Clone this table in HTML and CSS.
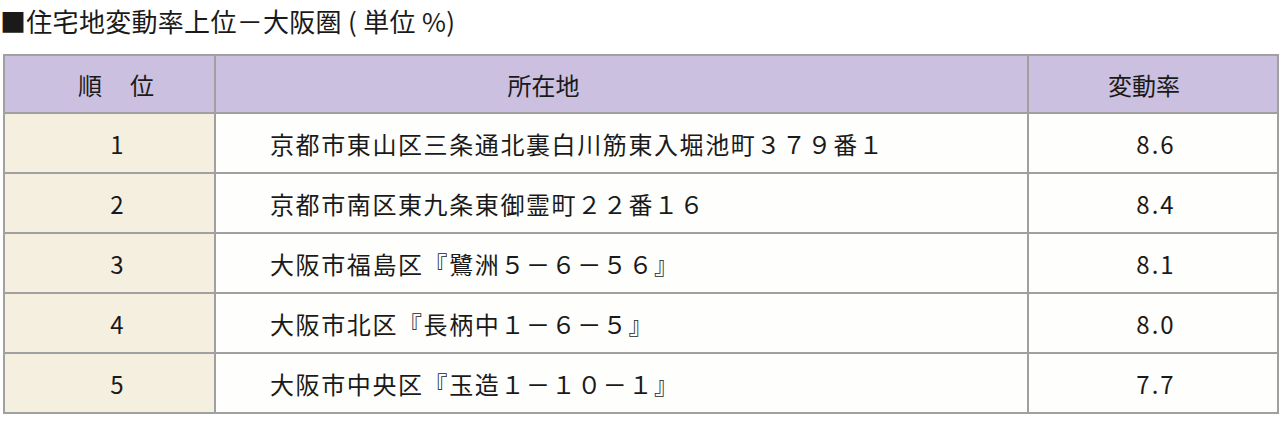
FILE: index.html
```html
<!DOCTYPE html>
<html lang="ja">
<head>
<meta charset="utf-8">
<link rel="stylesheet" href="styles.css">
</head>
<body>
<div class="title">■住宅地変動率上位－大阪圏 ( 単位 %)</div>
<table class="rank">
  <colgroup>
    <col class="c1"><col class="c2"><col class="c3">
  </colgroup>
  <thead>
    <tr><th class="h-no">順　位</th><th class="h-addr">所在地</th><th class="h-val">変動率</th></tr>
  </thead>
  <tbody>
    <tr><td class="no">1</td><td class="addr">京都市東山区三条通北裏白川筋東入堀池町３７９番１</td><td class="val">8.6</td></tr>
    <tr><td class="no">2</td><td class="addr">京都市南区東九条東御霊町２２番１６</td><td class="val">8.4</td></tr>
    <tr><td class="no">3</td><td class="addr">大阪市福島区『鷺洲５－６－５６』</td><td class="val">8.1</td></tr>
    <tr><td class="no">4</td><td class="addr">大阪市北区『長柄中１－６－５』</td><td class="val">8.0</td></tr>
    <tr><td class="no">5</td><td class="addr">大阪市中央区『玉造１－１０－１』</td><td class="val">7.7</td></tr>
  </tbody>
</table>
</body>
</html>
```
FILE: styles.css
```css
html, body {
  margin: 0;
  padding: 0;
  background: #ffffff;
}
body {
  font-family: "Noto Sans CJK JP", "Noto Sans", sans-serif;
  color: #1a1a1a;
}
.title {
  font-size: 26px;
  line-height: 30px;
  padding: 6px 0 0 0;
  height: 54px;
  box-sizing: border-box;
  white-space: nowrap;
  letter-spacing: 0.3px;
}
.rank {
  margin-left: 3px;
  width: 1274px;
  border-collapse: collapse;
  table-layout: fixed;
  font-size: 24px;
}
.c1 { width: 211px; }
.c2 { width: 813px; }
.c3 { width: 250px; }
.rank th, .rank td {
  border: 2px solid #a0a0a0;
  padding: 0;
  font-weight: normal;
}
.rank th {
  background: #cbc0df;
  height: 56px;
  text-align: center;
}
.rank th.h-no { padding-left: 15px; letter-spacing: 2px; }
.rank th.h-addr { padding-right: 156px; }
.rank th.h-val { padding-right: 18px; }
.rank td {
  height: 58px;
  background: #fefefc;
}
.rank td.no {
  background: #f5efe0;
  text-align: center;
  padding-left: 15px;
}
.rank td.addr {
  padding-left: 54px;
  letter-spacing: 1.6px;
}
.rank td.val {
  text-align: center;
  letter-spacing: 2px;
  padding-left: 6px;
}
```
